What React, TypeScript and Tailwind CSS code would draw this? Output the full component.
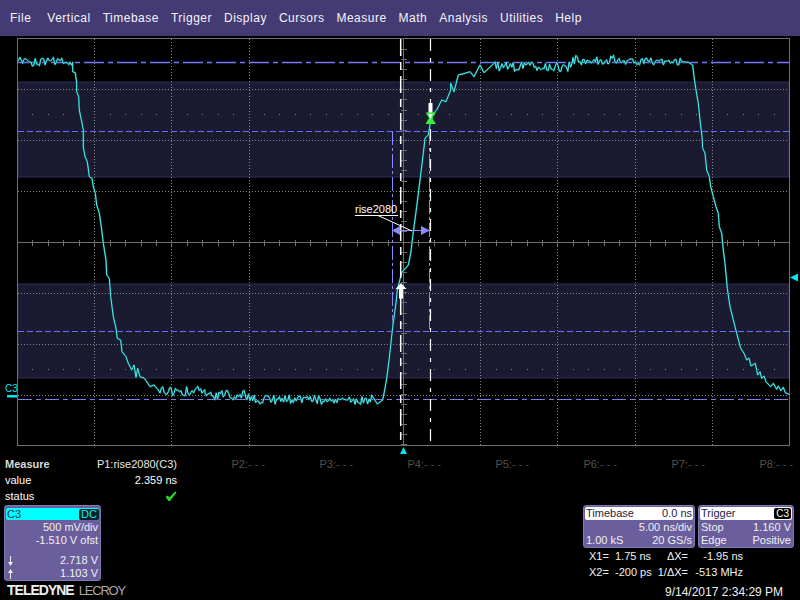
import React from "react";

const FONT = "font-['Liberation_Sans',Arial,sans-serif]";

function noise(x0: number, x1: number, y: number, amp: number, seedStart: number): number[][] {
  const out: number[][] = [];
  let s = seedStart;
  for (let x = x0; x < x1; x += 1.4) {
    s = (s * 1103515245 + 12345) & 0x7fffffff;
    const r = (s >> 8) % 1000 / 1000 - 0.5;
    out.push([x, y + r * amp * 2]);
  }
  return out;
}

const trace: number[][] = [
  ...noise(17, 72, 61.5, 5, 7),
  [72.7, 62.3], [72.7, 71.7], [75.3, 72.7], [76.7, 83], [76.7, 91.7], [78.7, 96.7], [79.3, 110], [81.7, 121.7],
  [83.3, 130], [83.3, 147], [85, 156.7], [87.3, 161.7], [89.3, 176.7], [92, 178.3], [93.3, 186.7], [95.3, 193.3],
  [96.7, 205], [99.3, 213.3], [101.3, 226.7], [103.3, 243.3], [106, 260], [106.7, 275], [109.3, 278.3], [110.7, 296.7],
  [113.3, 316.7], [116, 328.3], [117.3, 338.3], [120.7, 340], [122, 351.7], [126, 356.7], [128.3, 363.3], [131.7, 370],
  [134, 365], [136, 377.3], [137.7, 368.3], [140, 376.7], [144, 378], [147, 382], [150, 386.7], [154, 385], [158.3, 390],
  ...noise(160, 205, 391, 5, 21),
  ...noise(205, 250, 395, 5, 33),
  ...noise(250, 371, 400, 5, 49),
  [371.7, 395], [377.3, 404], [382.7, 400], [385, 388.3], [386.7, 378.3], [389.3, 358.3], [392.7, 326.7], [396, 303],
  [397.3, 290], [401.7, 272.7], [408.3, 265], [410.7, 253.3], [412.7, 236.7], [416.7, 206.7], [420, 180], [423.3, 153.3],
  [425, 138.3], [428.3, 135], [430, 125], [433.3, 113.3], [436.7, 110], [441.7, 100], [446, 101.7], [450.7, 90],
  [450.7, 83.3], [454, 91.7], [458.3, 75], [465, 73.3], [470, 71.7], [474, 76.7], [480, 65], [484, 72.7], [493.3, 64],
  ...noise(495, 573, 66.5, 5, 77),
  ...noise(573, 620, 60, 5, 91),
  ...noise(620, 681, 61.5, 3.5, 105),
  [681.7, 61.7], [688.3, 62.3], [692.7, 65], [694, 76.7], [696, 90], [698.3, 103.3], [700, 120], [702, 136.7], [702.7, 148.3],
  [705, 153.3], [706.7, 170], [709.3, 176.7], [710.7, 186.7], [713.3, 196.7], [716, 206.7], [718.3, 213.3], [719.3, 226.7],
  [721.7, 233.3], [723.3, 250], [725, 263.3], [727.3, 288.3], [730, 306.7], [733.3, 320], [736.7, 333.3], [740.7, 348.3],
  [744, 353.3], [746.7, 360], [749, 358], [751, 366], [755.3, 363.3], [757.7, 375], [760, 371.7], [761.7, 378.3], [764, 376],
  [766, 381.7], [770.7, 386.7], [773.3, 383.3], [776.7, 389.3], [778.3, 386], [781, 390.7], [783.3, 387.3], [785.3, 392.7], [789, 394.3],
];
const tracePts = trace.map((p) => `${p[0].toFixed(1)},${p[1].toFixed(1)}`).join(" ");

const gridX = [1, 2, 3, 4, 5, 6, 7, 8, 9].map((k) => 17 + 77.2 * k);
const gridY = [89.5, 140.5, 191.5, 293.5, 344.5, 395.5];
const tickX: number[] = [];
for (let x = 17 + 15.44; x < 789; x += 15.44) tickX.push(Math.round(x) + 0.5);
const tickY: number[] = [];
for (let y = 38.5 + 10.15; y < 445; y += 10.15) tickY.push(Math.round(y) + 0.5);

function Plot() {
  return (
    <svg width={800} height={420} viewBox="0 36 800 420" className="block">
      <rect x={18} y={82} width={771} height={95} fill="#1a1a30" stroke="#2e2d5c" />
      <rect x={18} y={284} width={771} height={94} fill="#1a1a30" stroke="#2e2d5c" />
      {gridY.map((y) => (
        <line key={y} x1={18} x2={789} y1={y} y2={y} stroke="#858585" strokeDasharray="1 2" />
      ))}
      {gridX.filter((_, i) => i !== 3).map((x) => (
        <line key={x} x1={Math.round(x) + 0.5} x2={Math.round(x) + 0.5} y1={39} y2={445} stroke="#858585" strokeDasharray="1 2" />
      ))}
      {[114.5, 369.5].map((y) =>
        tickX.map((x) => <rect key={`${x}-${y}`} x={x - 0.5} y={y - 0.5} width={1} height={1} fill="#858585" />)
      )}
      <line x1={18} x2={789} y1={242.5} y2={242.5} stroke="#6e6e6e" />
      <line x1={403.5} x2={403.5} y1={39} y2={445} stroke="#6e6e6e" />
      {tickX.map((x) => (
        <line key={x} x1={x} x2={x} y1={240} y2={246} stroke="#6e6e6e" />
      ))}
      {tickY.map((y) => (
        <line key={y} x1={401} x2={407} y1={y} y2={y} stroke="#6e6e6e" />
      ))}
      <rect x={17.5} y={38.5} width={772} height={407} fill="none" stroke="#707070" />

      <line x1={18} x2={789} y1={62.5} y2={62.5} stroke="#7878ff" strokeWidth={1.3} strokeDasharray="20 4 5 4" />
      <line x1={18} x2={789} y1={131.5} y2={131.5} stroke="#6c6cff" strokeDasharray="6 3" />
      <line x1={18} x2={789} y1={331.5} y2={331.5} stroke="#6c6cff" strokeDasharray="6 3" />
      <line x1={18} x2={789} y1={399.5} y2={399.5} stroke="#7d7df0" strokeDasharray="14 4 5 4" />
      <line x1={392.5} x2={392.5} y1={131} y2={331} stroke="#8a8aff" strokeDasharray="14 3 3 3" />
      <line x1={429.5} x2={429.5} y1={131} y2={331} stroke="#8a8aff" strokeDasharray="14 3 3 3" />

      <polyline points={tracePts} fill="none" stroke="#0a4f56" strokeWidth={2} strokeLinejoin="round" />
      <polyline points={tracePts} fill="none" stroke="#55efef" strokeWidth={1} strokeLinejoin="round" />

      <line x1={400.7} x2={400.7} y1={39} y2={445} stroke="#ffffff" strokeWidth={1.5} strokeDasharray="17 6 8 6" />
      <line x1={430.5} x2={430.5} y1={39} y2={445} stroke="#ffffff" strokeWidth={1.2} strokeDasharray="12 7 4 7" />

      <line x1={392} x2={430} y1={230.5} y2={230.5} stroke="#8b8bff" />
      <polygon points="392,230.5 400,226 400,235" fill="#8b8bff" />
      <polygon points="430,230.5 421,226 421,235" fill="#8b8bff" />
      <line x1={355} x2={398} y1={215.5} y2={215.5} stroke="#ffffff" />
      <line x1={378} x2={412} y1={215.5} y2={231} stroke="#ffffff" />

      <polygon points="401,283 406.5,289 403,289 403,298.5 399,298.5 399,289 395.5,289" fill="#ffffff" />
      <rect x={428.5} y={103} width={4} height={13} fill="#ffffff" />
      <polygon points="425.5,112.5 436,112.5 432,118 436,124 425.5,124 429,118" fill="#35f03a" />
      <polygon points="428.5,114 432.5,114 430.5,119" fill="#ffffff" />

      <polygon points="403.5,447 407,454 400,454" fill="#00e5ee" />
      <polygon points="790,277.5 798,273.5 798,281.5" fill="#00e5ee" />
      <rect x={7} y={395} width={10} height={2.5} fill="#00e5ee" />
    </svg>
  );
}

const menu = ["File", "Vertical", "Timebase", "Trigger", "Display", "Cursors", "Measure", "Math", "Analysis", "Utilities", "Help"];
const params = ["P2:- - -", "P3:- - -", "P4:- - -", "P5:- - -", "P6:- - -", "P7:- - -", "P8:- - -"];

function Row({ left, right, cls = "" }: { left?: React.ReactNode; right: string; cls?: string }) {
  return (
    <div className={`flex justify-between items-center h-[13px] leading-[13px] px-[1px] ${cls}`}>
      <span className="flex items-center">{left}</span>
      <span>{right}</span>
    </div>
  );
}

function VArrow({ up }: { up?: boolean }) {
  return (
    <svg width={5} height={10} viewBox="0 0 5 10" className={`ml-[1px] ${up ? "rotate-180" : ""}`}>
      <path d="M2 0 H3 V6 H5 L2.5 10 L0 6 H2 Z" fill="#f0f0f0" />
    </svg>
  );
}

export default function App() {
  return (
    <div className={`${FONT} w-[800px] h-[600px] bg-black text-white text-[11px] flex flex-col overflow-hidden`}>
      <div className="h-[36px] bg-[#443a74] flex items-center gap-[12px] pl-[10px] text-[12px] tracking-[0.5px] text-[#f4f4f8]">
        {menu.map((m) => (
          <span key={m} className={m === "File" ? "mr-[4px]" : ""}>{m}</span>
        ))}
      </div>

      <div className="relative h-[420px]">
        <Plot />
        <div className="absolute left-[355px] top-[167px] text-[11px] leading-[13px]">rise2080</div>
        <div className="absolute left-[5px] top-[347px] text-[10px] leading-[12px] text-[#00e5ee]">C3</div>
      </div>

      <div className="h-[48px] grid grid-cols-[89px_repeat(8,88px)] grid-rows-[16px_16px_16px] text-[11px] leading-[16px]">
        <div className="pl-[5px] font-bold text-[#d8d8d8]">Measure</div>
        <div className="text-right text-[#e8e8e8]">P1:rise2080(C3)</div>
        {params.map((p) => (
          <div key={p} className="text-right text-[#505050]">
            {p}
          </div>
        ))}
        <div className="pl-[5px]">value</div>
        <div className="text-right col-span-1">2.359 ns</div>
        <div className="col-span-7" />
        <div className="pl-[5px]">status</div>
        <div className="flex justify-end items-center">
          <svg width={12} height={11} viewBox="0 0 12 11">
            <path d="M0.5 6 L2.5 4.5 L4.5 6.5 L10 0.5 L11.5 1.5 L5 10 L3.5 10 Z" fill="#25d925" />
          </svg>
        </div>
      </div>

      <div className="flex-1 flex justify-between">
        <div className="w-[130px]">
          <div className="ml-[4px] mt-[1px] w-[97px] h-[76px] bg-[#6a5f9c] border border-[#8078b0] rounded-[3px] p-[1px] pt-[2px] text-[#f0f0f0]">
            <div className="h-[12px] bg-[#00ffff] rounded-[2px] flex justify-between items-center pl-[1px] text-[#10324a] leading-[12px]">
              <span>C3</span>
              <span className="bg-[#06222a] text-[#20e8f0] rounded-[2px] px-[2px] h-[11px] leading-[11px] text-[11px]">DC</span>
            </div>
            <Row right="500 mV/div" cls="mt-[1px]" />
            <Row right="-1.510 V ofst" />
            <Row left={<VArrow />} right="2.718 V" cls="mt-[7px]" />
            <Row left={<VArrow up />} right="1.103 V" />
          </div>
          <div className="ml-[7px] mt-[1px] flex items-baseline gap-[5px] leading-[16px] whitespace-nowrap">
            <span className="text-[14px] font-bold tracking-[-1px] text-[#ededed]">TELEDYNE</span>
            <span className="text-[13px] tracking-[-1.2px] text-[#a8a8a8]">LECROY</span>
          </div>
        </div>

        <div className="w-[217px] flex flex-col">
          <div className="flex gap-[3px] mt-[1px] text-[#f0f0f0]">
            <div className="w-[112px] h-[43px] bg-[#6a5f9c] border border-[#8078b0] rounded-[3px] p-[1px]">
              <div className="h-[13px] bg-white rounded-[2px] flex justify-between px-[1px] text-[#222244] leading-[13px]">
                <span>Timebase</span>
                <span>0.0 ns</span>
              </div>
              <Row right="5.00 ns/div" cls="mt-[1px]" />
              <Row left="1.00 kS" right="20 GS/s" />
            </div>
            <div className="w-[96px] h-[43px] bg-[#6a5f9c] border border-[#8078b0] rounded-[3px] p-[1px]">
              <div className="h-[13px] bg-white rounded-[2px] flex justify-between items-center px-[1px] text-[#222244] leading-[13px]">
                <span>Trigger</span>
                <span className="bg-black text-white rounded-[2px] px-[2px] h-[11px] leading-[11px] text-[10px]">C3</span>
              </div>
              <Row left="Stop" right="1.160 V" cls="mt-[1px]" />
              <Row left="Edge" right="Positive" />
            </div>
          </div>
          <div className="grid grid-cols-[26px_36px_37px_55px] ml-[6px] w-[154px] grid-rows-[16px_16px] leading-[16px] whitespace-nowrap text-[#f0f0f0]">
            <span>X1=</span>
            <span className="text-right">1.75 ns</span>
            <span className="text-right">ΔX=</span>
            <span className="text-right">-1.95 ns</span>
            <span>X2=</span>
            <span className="text-right">-200 ps</span>
            <span className="text-right">1/ΔX=</span>
            <span className="text-right">-513 MHz</span>
          </div>
          <div className="mt-[5px] ml-[82px] text-[12px] leading-[14px] whitespace-nowrap text-[#eeeeee]">
            9/14/2017 2:34:29 PM
          </div>
        </div>
      </div>
    </div>
  );
}
